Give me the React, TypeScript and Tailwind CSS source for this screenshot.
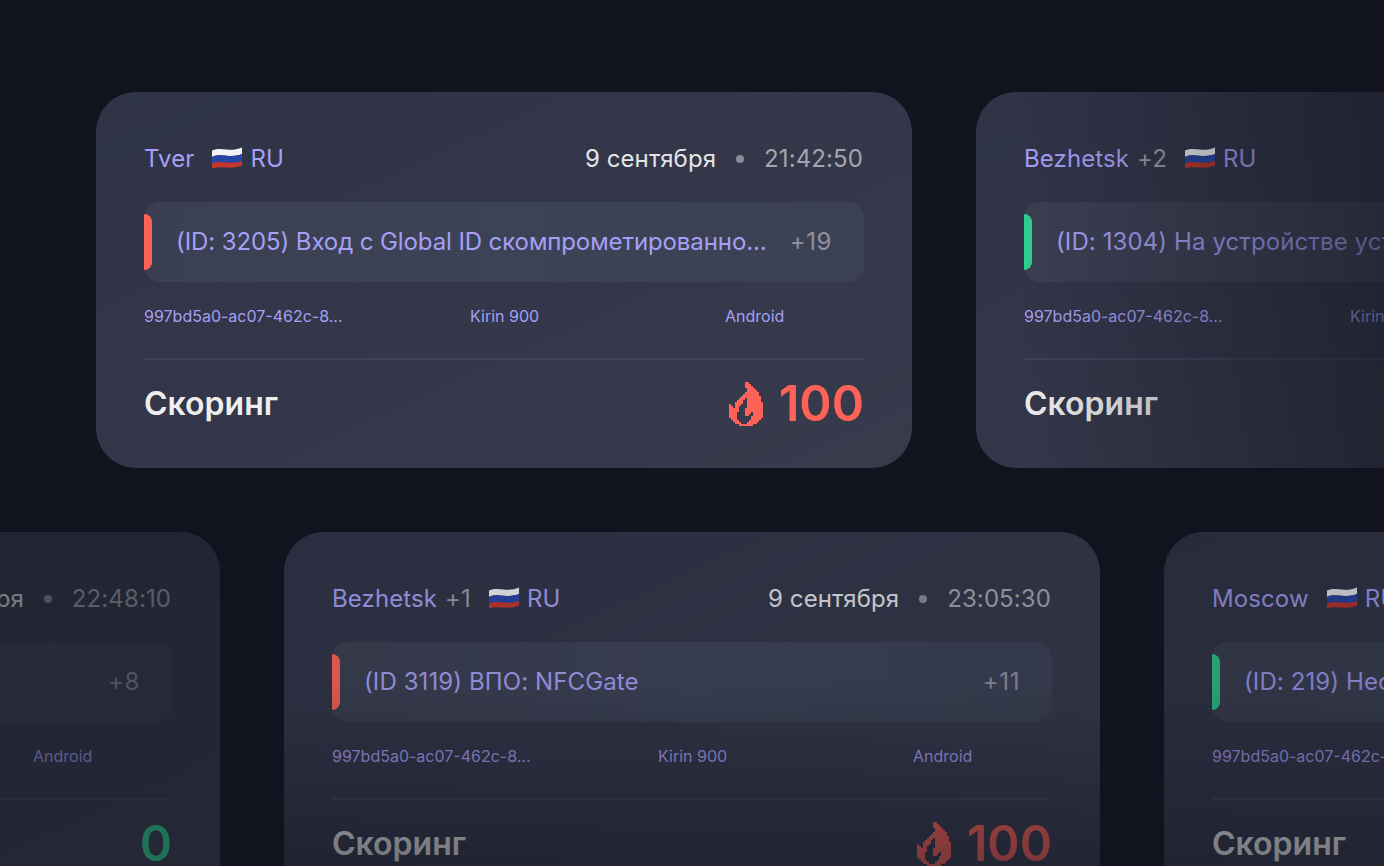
const flame = [
  "........##.......",
  "........###......",
  "........####.....",
  ".........####....",
  ".........#####...",
  "........#######..",
  ".......########..",
  "......##########.",
  ".....###.#######.",
  "....###..#######.",
  "...####..########",
  "#..###...########",
  "##.##....########",
  "#####...#########",
  "#####...#########",
  "####....###.#####",
  "####....##..#####",
  "####.......######",
  ".###.......#####.",
  "..###.....#####..",
  "...###...#####...",
  ".....#######.....",
];

function Flame() {
  return (
    <svg width="34" height="44" viewBox="0 0 17 22" shapeRendering="crispEdges" className="fill-current">
      {flame.map((row, y) =>
        row.split("").map((c, x) => (c === "#" ? <rect key={`${x}-${y}`} x={x} y={y} width="1" height="1" /> : null))
      )}
    </svg>
  );
}

function Flag() {
  return (
    <svg width="30" height="22" viewBox="0 0 30 22" className="shrink-0 -mt-[3px]">
      <path d="M0 3.5C6 1 10 2 15 2.6S25 2.5 30 .5V7C25 9 20 9.2 15 8.8S5 7.5 0 10Z" fill="#f4f4f6" />
      <path d="M0 10C5 7.5 10 8.3 15 8.8S25 9 30 7V14C25 16 20 16 15 15.6S5 14.5 0 16.6Z" fill="#2646a8" />
      <path d="M0 16.6C5 14.5 10 15.1 15 15.6S25 16 30 14V18.5C25 20.6 20 21 15 20.6S5 19.5 0 21.6Z" fill="#c4362e" />
    </svg>
  );
}

type CardProps = {
  city: string;
  extra?: string;
  time: string;
  alert: string;
  alertTracking?: string;
  count: string;
  bar: string;
  score: string;
  scoreColor: string;
  hot?: boolean;
  dim: string;
};

function Card({ city, extra, time, alert, alertTracking = "tracking-[0.1px]", count, bar, score, scoreColor, hot, dim }: CardProps) {
  return (
    <div className="relative w-[816px] h-[376px] shrink-0 rounded-[40px] bg-gradient-to-br from-[#2f3346] to-[#373b4c] px-12 pt-[49px]">
      <div className="flex items-center justify-between h-9 text-2xl leading-9 tracking-[0.1px]">
        <div className="flex items-center whitespace-nowrap text-[#a79ff5]">
          <span>{city}</span>
          {extra && <span className="ml-2 text-[#9a9cab]">{extra}</span>}
          <span className="ml-[18px] mr-[8px]"><Flag /></span>
          <span>RU</span>
        </div>
        <div className="flex items-center whitespace-nowrap mr-px">
          <span className="text-[#e4e4e7]">9 сентября</span>
          <span className="mx-5 size-2 rounded-full bg-[#8b8d96]"></span>
          <span className="text-[#a3a5ae]">{time}</span>
        </div>
      </div>

      <div className="relative mt-[25px] h-20 rounded-2xl bg-gradient-to-r from-[#3a3f51] via-[#3d4356] to-[#3b4153] flex items-center justify-between gap-5 pl-8 pr-8 text-2xl">
        <span className={`absolute left-0 top-3 h-14 w-2 rounded-r-lg ${bar}`}></span>
        <span className={`truncate text-[#a79ff5] ${alertTracking}`}>{alert}</span>
        <span className="shrink-0 tracking-[0.6px] text-[#8f919f]">{count}</span>
      </div>

      <div className="mt-[22px] grid grid-cols-[326px_255px_1fr] text-base leading-6 text-[#a79ff5]">
        <span>997bd5a0-ac07-462c-8...</span>
        <span>Kirin 900</span>
        <span>Android</span>
      </div>

      <div className="mt-[30px] h-0.5 bg-[#3f4459]"></div>

      <div className="mt-[18px] flex items-center justify-between h-[52px]">
        <span className="text-[32px] font-semibold text-[#eeeeee]">Скоринг</span>
        <div className={`flex items-center gap-4 text-[49px] font-semibold ${scoreColor}`}>
          {hot && <Flame />}
          <span>{score}</span>
        </div>
      </div>
      <div className={`absolute inset-0 rounded-[40px] pointer-events-none ${dim}`}></div>
    </div>
  );
}

export default function App() {
  return (
    <div className="relative h-[866px] w-[1384px] overflow-hidden bg-[#11131e] font-['Inter',sans-serif]">
      <div className="flex flex-col gap-16 pt-[92px]">
        <div className="flex gap-16 ml-24">
          <Card city="Tver" time="21:42:50" alert="(ID: 3205) Вход с Global ID скомпрометированно..." alertTracking="tracking-[-0.1px]" count="+19" bar="bg-[#ff6257]" score="100" scoreColor="text-[#ff6257]" hot dim="" />
          <Card city="Bezhetsk" extra="+2" time="21:44:12" alert="(ID: 1304) На устройстве установлено приложение" count="+4" bar="bg-[#2ed08f]" score="0" scoreColor="text-[#2ed08f]" dim="bg-gradient-to-r from-transparent from-5% to-[#11131e]/55 to-50%" />
        </div>
        <div className="flex gap-16 -ml-[596px]">
          <Card city="Moscow" time="22:48:10" alert="(ID: 219) Несоответствие" count="+8" bar="bg-[#2ed08f]" score="0" scoreColor="text-[#2ed08f]" dim="bg-[#11131e]/50" />
          <Card city="Bezhetsk" extra="+1" time="23:05:30" alert="(ID 3119) ВПО: NFCGate" count="+11" bar="bg-[#ff6257]" score="100" scoreColor="text-[#ff6257]" hot dim="bg-gradient-to-b from-[#11131e]/15 from-40% to-[#11131e]/65" />
          <Card city="Moscow" time="23:10:02" alert="(ID: 219) Несоответствие устройства" count="+3" bar="bg-[#2ed08f]" score="0" scoreColor="text-[#2ed08f]" dim="bg-gradient-to-b from-[#11131e]/25 from-40% to-[#11131e]/60" />
        </div>
      </div>
    </div>
  );
}
